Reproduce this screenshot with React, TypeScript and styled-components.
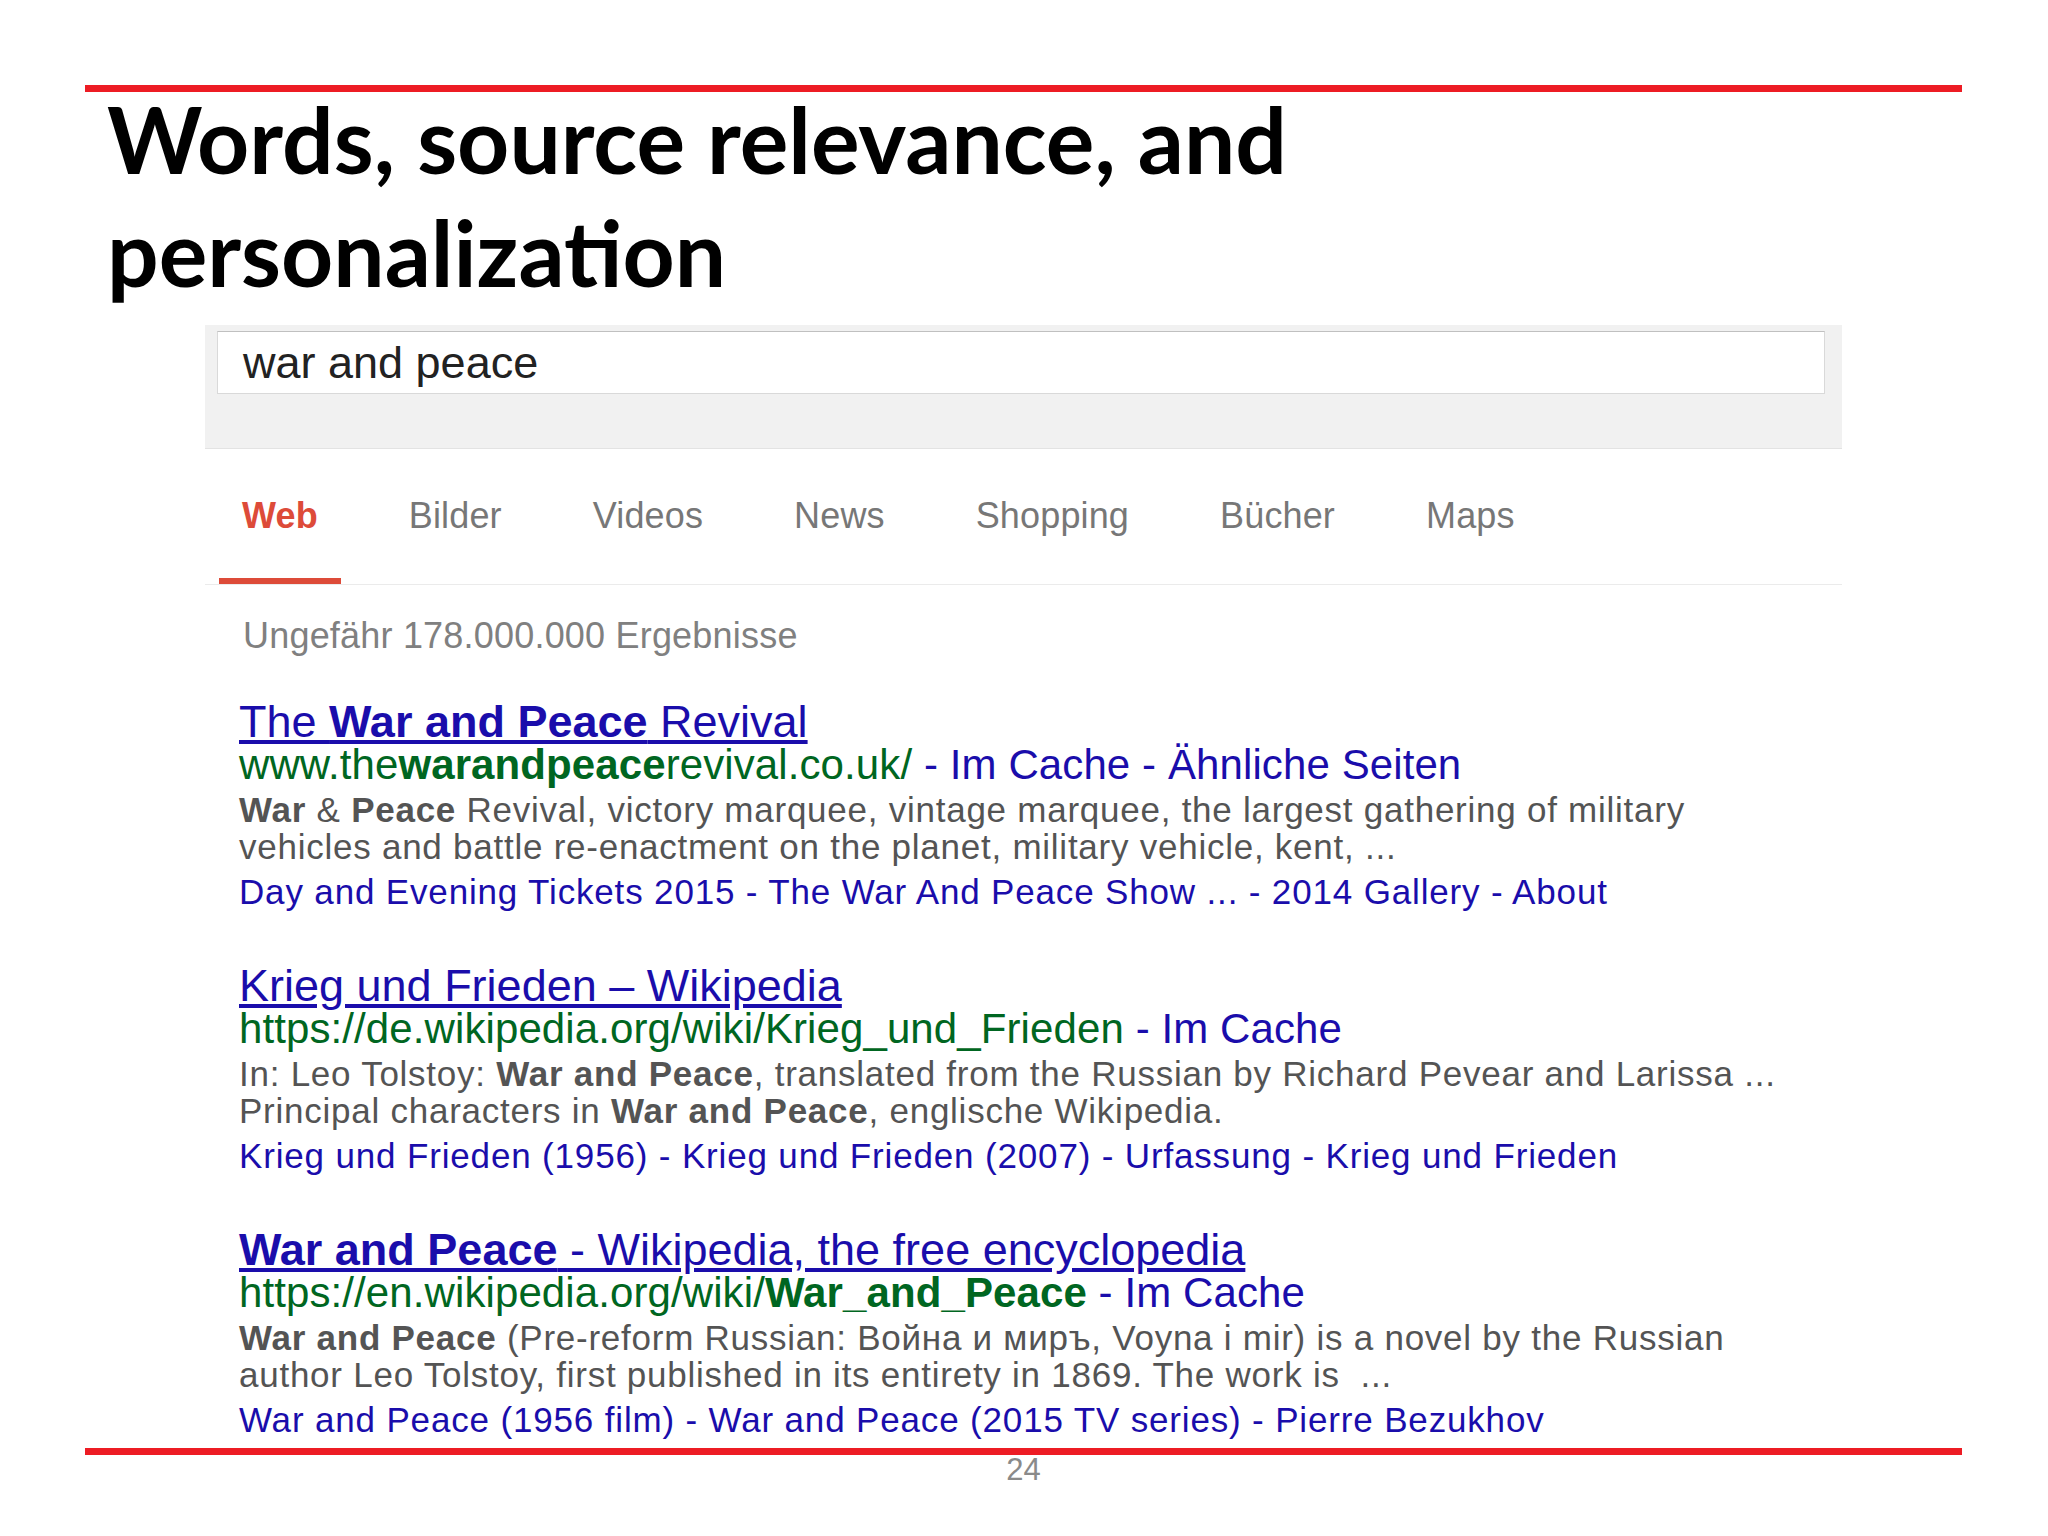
import * as React from "react";
import styled, { createGlobalStyle } from "styled-components";

const GlobalStyle = createGlobalStyle`
  html, body {
    margin: 0;
    padding: 0;
    background: #fff;
  }
  body {
    font-family: "Liberation Sans", Arial, sans-serif;
  }
`;

const Slide = styled.div`
  width: 2048px;
  height: 1536px;
  box-sizing: border-box;
  padding: 85px 86px 0 85px;
  display: flex;
  flex-direction: column;
  overflow: hidden;
`;

const Rule = styled.div<{ $top?: number }>`
  flex: none;
  height: 7px;
  margin-top: ${(p) => p.$top ?? 0}px;
  background: #ed1c24;
`;

const Title = styled.h1`
  margin: -10px 0 0 22px;
  font-family: Lato, "Open Sans", sans-serif;
  font-weight: 700;
  font-size: 91px;
  line-height: 113px;
  color: #000;
`;

const Shot = styled.div`
  margin: 17px 0 0 120px;
  width: 1637px;
  display: flex;
  flex-direction: column;
`;

const SearchArea = styled.div`
  box-sizing: border-box;
  height: 124px;
  padding: 6px 17px 0 12px;
  background: #f1f1f1;
  border-bottom: 1px solid #e3e3e3;
`;

const SearchBox = styled.div`
  box-sizing: border-box;
  height: 63px;
  display: flex;
  align-items: center;
  padding-left: 25px;
  background: #fff;
  border: 1px solid #d9d9d9;
  border-top-color: #c0c0c0;
  font-size: 45px;
  color: #222;
`;

const Tabs = styled.nav`
  display: flex;
  gap: 45px;
  padding-left: 14px;
  border-bottom: 1px solid #ebebeb;
`;

const Tab = styled.span<{ $active?: boolean }>`
  padding: 45px 23px 40px;
  line-height: 44px;
  font-size: 36px;
  letter-spacing: 0.15px;
  color: ${(p) => (p.$active ? "#dd4b39" : "#777")};
  font-weight: ${(p) => (p.$active ? 700 : 400)};
  border-bottom: 6px solid ${(p) => (p.$active ? "#dd4b39" : "transparent")};
`;

const Count = styled.div`
  margin-top: 29px;
  padding-left: 38px;
  font-size: 36px;
  line-height: 44px;
  letter-spacing: 0.2px;
  color: #808080;
`;

const Results = styled.div`
  display: flex;
  flex-direction: column;
  gap: 51px;
  padding: 42px 0 0 34px;
`;

const Result = styled.div`
  display: flex;
  flex-direction: column;
  white-space: nowrap;
`;

const ResultTitle = styled.a`
  align-self: flex-start;
  font-size: 45px;
  line-height: 43px;
  color: #1a0dab;
  text-decoration: underline;
  cursor: pointer;
`;

const Url = styled.div`
  font-size: 42px;
  line-height: 43px;
  letter-spacing: 0.1px;
  color: #006621;
`;

const Cache = styled.span`
  color: #1a0dab;
`;

const Snippet = styled.div`
  margin-top: 5px;
  font-size: 35px;
  line-height: 37px;
  letter-spacing: 0.75px;
  color: #545454;
`;

const Sitelinks = styled.div`
  margin-top: 5px;
  font-size: 35px;
  line-height: 43px;
  letter-spacing: 0.84px;
  color: #1a0dab;
`;

const PageNum = styled.div`
  text-align: center;
  font-size: 31px;
  line-height: 30px;
  color: #8a8a8a;
`;

const TABS = ["Web", "Bilder", "Videos", "News", "Shopping", "Bücher", "Maps"];

export default function App() {
  return (
    <>
      <GlobalStyle />
      <Slide>
        <Rule />
        <Title>
          Words, source relevance, and
          <br />
          personalization
        </Title>
        <Shot>
          <SearchArea>
            <SearchBox>war and peace</SearchBox>
          </SearchArea>
          <Tabs>
            {TABS.map((t, i) => (
              <Tab key={t} $active={i === 0}>
                {t}
              </Tab>
            ))}
          </Tabs>
          <Count>Ungefähr 178.000.000 Ergebnisse</Count>
          <Results>
            <Result>
              <ResultTitle>
                The <b>War and Peace</b> Revival
              </ResultTitle>
              <Url>
                www.the<b>warandpeace</b>revival.co.uk/
                <Cache> - Im Cache - Ähnliche Seiten</Cache>
              </Url>
              <Snippet>
                <b>War</b> &amp; <b>Peace</b> Revival, victory marquee, vintage
                marquee, the largest gathering of military
                <br />
                vehicles and battle re-enactment on the planet, military
                vehicle, kent, ...
              </Snippet>
              <Sitelinks>
                Day and Evening Tickets 2015 - The War And Peace Show ... - 2014
                Gallery - About
              </Sitelinks>
            </Result>
            <Result>
              <ResultTitle>Krieg und Frieden – Wikipedia</ResultTitle>
              <Url>
                https://de.wikipedia.org/wiki/Krieg_und_Frieden
                <Cache> - Im Cache</Cache>
              </Url>
              <Snippet>
                In: Leo Tolstoy: <b>War and Peace</b>, translated from the
                Russian by Richard Pevear and Larissa ...
                <br />
                Principal characters in <b>War and Peace</b>, englische
                Wikipedia.
              </Snippet>
              <Sitelinks>
                Krieg und Frieden (1956) - Krieg und Frieden (2007) - Urfassung
                - Krieg und Frieden
              </Sitelinks>
            </Result>
            <Result>
              <ResultTitle>
                <b>War and Peace</b> - Wikipedia, the free encyclopedia
              </ResultTitle>
              <Url>
                https://en.wikipedia.org/wiki/<b>War_and_Peace</b>
                <Cache> - Im Cache</Cache>
              </Url>
              <Snippet>
                <b>War and Peace</b> (Pre-reform Russian: Война и миръ, Voyna i
                mir) is a novel by the Russian
                <br />
                author Leo Tolstoy, first published in its entirety in 1869. The
                work is &nbsp;...
              </Snippet>
              <Sitelinks>
                War and Peace (1956 film) - War and Peace (2015 TV series) -
                Pierre Bezukhov
              </Sitelinks>
            </Result>
          </Results>
        </Shot>
        <Rule $top={7} />
        <PageNum>24</PageNum>
      </Slide>
    </>
  );
}
